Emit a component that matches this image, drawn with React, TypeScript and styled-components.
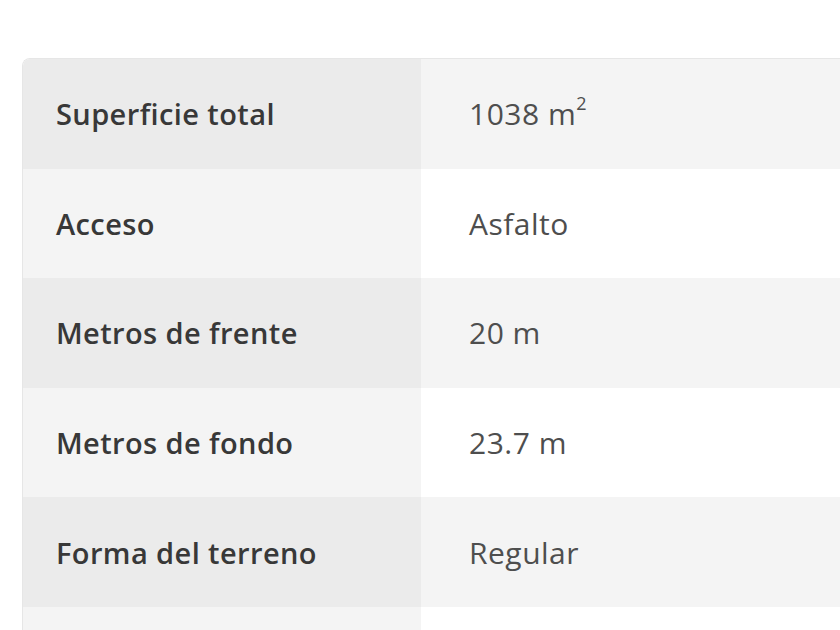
import styled, { createGlobalStyle } from 'styled-components';

const Global = createGlobalStyle`
  html, body {
    margin: 0;
    padding: 0;
    background: #ffffff;
    overflow: hidden;
  }
  body {
    font-family: 'Open Sans', Lato, Arial, sans-serif;
    font-variant-ligatures: none;
  }
`;

const rows = [
  { label: 'Superficie total', value: '1038 m', sup: '2' },
  { label: 'Acceso', value: 'Asfalto' },
  { label: 'Metros de frente', value: '20 m' },
  { label: 'Metros de fondo', value: '23.7 m' },
  { label: 'Forma del terreno', value: 'Regular' },
  { label: 'Orientación', value: 'Norte' },
];

const Page = styled.div`
  padding: 58px 0 0 22px;
  width: 900px;
`;

const Table = styled.div`
  border: 1px solid #e6e6e6;
  border-right: none;
  border-top-left-radius: 8px;
  overflow: hidden;
`;

const Row = styled.div<{ $odd: boolean }>`
  display: grid;
  grid-template-columns: 398px 1fr;
  height: 109.6px;
  background: ${(p) => (p.$odd ? '#f4f4f4' : '#ffffff')};
`;

const Label = styled.div<{ $odd: boolean }>`
  display: flex;
  align-items: center;
  padding-left: 33px;
  background: ${(p) => (p.$odd ? '#ebebeb' : '#f4f4f4')};
  color: #383838;
  font-size: 29px;
  font-weight: 600;
  letter-spacing: 0.4px;
`;

const Value = styled.div`
  display: flex;
  align-items: center;
  padding-left: 48px;
  color: #4e4e4e;
  font-size: 30px;
  font-weight: 400;
  letter-spacing: 0.5px;

  sup {
    font-size: 18px;
    position: relative;
    top: -4px;
  }
`;

export default function App() {
  return (
    <Page>
      <Global />
      <Table>
        {rows.map((r, i) => (
          <Row key={r.label} $odd={i % 2 === 0}>
            <Label $odd={i % 2 === 0}>{r.label}</Label>
            <Value>
              <span>
                {r.value}
                {r.sup && <sup>{r.sup}</sup>}
              </span>
            </Value>
          </Row>
        ))}
      </Table>
    </Page>
  );
}
